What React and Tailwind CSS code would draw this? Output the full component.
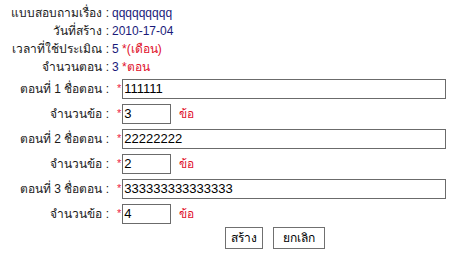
import { useState } from 'react';

// Survey setup form (old-style label/value table)

const Star = () => <span className="text-[#ee2244] text-[11px] mr-[1px] ml-[7px]">*</span>;

const TextRow = ({ label, children }) => (
  <div className="flex items-center h-[18px]">
    <div className="w-[110px] text-right pr-[1px]">{label} :</div>
    <div className="pl-[2px]">{children}</div>
  </div>
);

const InputRow = ({ label, children }) => (
  <div className="flex items-center h-[25px]">
    <div className="w-[110px] text-right pr-[1px]">{label} :</div>
    <div className="flex items-center">{children}</div>
  </div>
);

const App = () => {
  const [parts, setParts] = useState([
    { name: '111111', count: '3' },
    { name: '22222222', count: '2' },
    { name: '333333333333333', count: '4' },
  ]);

  const update = (i, key, value) =>
    setParts(prev => prev.map((p, idx) => (idx === i ? { ...p, [key]: value } : p)));

  return (
    <div className="w-[473px] h-[256px] bg-white pt-[4px] text-[12px] text-[#1a1a1a] font-['Tahoma','Liberation_Sans','Noto_Sans',sans-serif] leading-none">
      <TextRow label="แบบสอบถามเรื่อง">
        <span className="text-[#1a1a7a]">qqqqqqqqq</span>
      </TextRow>
      <TextRow label="วันที่สร้าง">
        <span className="text-[#1a1a7a]">2010-17-04</span>
      </TextRow>
      <TextRow label="เวลาที่ใช้ประเมิณ">
        <span className="text-[#1a1a7a]">5 </span>
        <span className="text-[#e0102a]">*(เดือน)</span>
      </TextRow>
      <TextRow label="จำนวนตอน">
        <span className="text-[#1a1a7a]">3 </span>
        <span className="text-[#e0102a]">*ตอน</span>
      </TextRow>

      {parts.map((p, i) => (
        <div key={i}>
          <InputRow label={`ตอนที่ ${i + 1} ชื่อตอน`}>
            <Star />
            <input
              type="text"
              value={p.name}
              onChange={e => update(i, 'name', e.target.value)}
              className="w-[324px] h-[20px] border border-[#6b6b6b] px-[1px] text-[13px] text-black outline-none"
            />
          </InputRow>
          <InputRow label="จำนวนข้อ">
            <Star />
            <input
              type="text"
              value={p.count}
              onChange={e => update(i, 'count', e.target.value)}
              className="w-[49px] h-[20px] border border-[#6b6b6b] px-[1px] text-[13px] text-black outline-none"
            />
            <span className="ml-[8px] text-[#e0102a]">ข้อ</span>
          </InputRow>
        </div>
      ))}

      <div className="flex gap-[10px] pl-[225px] pt-[1px]">
        <button className="h-[22px] w-[38px] border border-[#707070] bg-white text-black">สร้าง</button>
        <button className="h-[22px] w-[52px] border border-[#707070] bg-white text-black">ยกเลิก</button>
      </div>
    </div>
  );
};

export default App;
